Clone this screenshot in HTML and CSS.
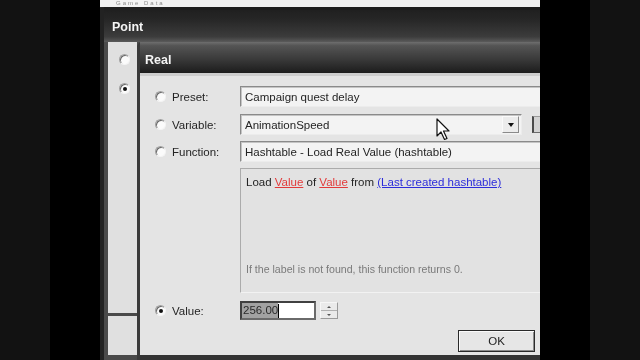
FILE: index.html
```html
<!DOCTYPE html>
<html>
<head>
<meta charset="utf-8">
<link rel="stylesheet" href="styles.css">
</head>
<body>
<div class="stage">
  <div class="band dim"></div>
  <div class="band black"></div>
  <div class="screen">
    <div class="backwin"><span>Game Data</span></div>
    <div class="win point">
      <div class="title">Point</div>
      <div class="point-body">
        <div class="point-col">
          <span class="radio"></span>
          <span class="radio on"></span>
        </div>
        <div class="point-foot"></div>
      </div>
    </div>
    <div class="win real">
      <div class="title">Real</div>
      <div class="real-body">
        <div class="row">
          <label class="opt"><span class="radio"></span>Preset:</label>
          <div class="field">Campaign quest delay</div>
        </div>
        <div class="row row-var">
          <label class="opt"><span class="radio"></span>Variable:</label>
          <div class="field select">AnimationSpeed<span class="drop-btn"><span class="tri-down"></span></span></div>
          <span class="extra"></span>
        </div>
        <div class="row">
          <label class="opt"><span class="radio"></span>Function:</label>
          <div class="field">Hashtable - Load Real Value (hashtable)</div>
        </div>
        <div class="desc">
          <div class="desc-line">Load <span class="param">Value</span> of <span class="param">Value</span> from <span class="link">(Last created hashtable)</span></div>
          <div class="desc-note">If the label is not found, this function returns 0.</div>
        </div>
        <div class="row row-value">
          <label class="opt"><span class="radio on"></span>Value:</label>
          <div class="num"><span class="sel">256.00</span><span class="caret"></span></div>
          <div class="spin"><span class="spin-half"><span class="tri-up"></span></span><span class="spin-half"><span class="tri-down small"></span></span></div>
        </div>
        <div class="row row-ok">
          <button class="ok">OK</button>
        </div>
      </div>
    </div>
    <svg class="cursor" width="15" height="23" viewBox="0 0 15 23">
      <path d="M1 1 L1 18 L5 14 L8.5 21.5 L11 20.5 L7.5 13 L13 13 Z" fill="#fff" stroke="#111" stroke-width="1.2" stroke-linejoin="round"/>
    </svg>
  </div>
  <div class="band black"></div>
  <div class="band dim"></div>
</div>
</body>
</html>
```
FILE: styles.css
```css
body {
  margin: 0;
  background: #111;
  font-family: "Liberation Sans", Arial, sans-serif;
}

.stage {
  display: flex;
  width: 640px;
  height: 360px;
  overflow: hidden;
}

.band { flex: 0 0 50px; }
.dim { background: #121212; }
.black { background: #000; }

.screen {
  flex: 0 0 440px;
  position: relative;
  overflow: hidden;
  background: #222;
  filter: blur(0.35px);
}

.backwin {
  height: 7px;
  background: #f2f2f2;
  border-bottom: 1px solid #2a2a2a;
  overflow: hidden;
  padding-left: 16px;
}

.backwin span {
  display: block;
  font-size: 6px;
  line-height: 7px;
  color: #8a8a8a;
  letter-spacing: 2px;
}

.win {
  position: absolute;
  display: flex;
  flex-direction: column;
}

.point {
  left: 1px;
  top: 7px;
  width: 470px;
  height: 360px;
  background: #3c3c3c;
  border-left: 3px solid #222;
  border-top-left-radius: 4px;
}

.title {
  flex: none;
  display: flex;
  align-items: center;
  color: #f4f4f4;
  font-weight: bold;
  font-size: 12.5px;
  box-sizing: border-box;
}

.point .title {
  height: 35px;
  padding: 5px 0 0 8px;
  background: linear-gradient(#1e1e1e, #262626 35%, #3c3c3c 85%, #5a5a5a);
}

.point-body {
  display: flex;
  flex-direction: column;
  padding-left: 4px;
  background: #4a4a4a;
  height: 318px;
}

.point-col {
  width: 29px;
  height: 271px;
  box-sizing: border-box;
  background: #e0e0e0;
  padding: 12px 0 0 11px;
  display: flex;
  flex-direction: column;
  gap: 18px;
}

.point-foot {
  width: 29px;
  height: 39px;
  margin-top: 3px;
  background: #e0e0e0;
}

.real {
  left: 37px;
  top: 42px;
  width: 404px;
  height: 318px;
  box-sizing: border-box;
  background: #333;
  border-left: 3px solid #3a3a3a;
  border-top-left-radius: 5px;
}

.real .title {
  height: 31px;
  padding: 4px 0 0 5px;
  background: linear-gradient(#6e6e6e, #545454 12%, #3a3a3a 55%, #1c1c1c);
}

.real-body {
  flex: none;
  height: 282px;
  box-sizing: border-box;
  border-top: 3px solid #cdcdcd;
  background: #e4e4e4;
  padding: 10px 0 0 15px;
  display: flex;
  flex-direction: column;
  gap: 6px;
  font-size: 11.5px;
  color: #242424;
}

.row {
  display: flex;
  align-items: center;
  height: 21px;
  flex: none;
}

.row-var { margin-top: 1px; }

.opt {
  flex: 0 0 85px;
  display: flex;
  align-items: center;
  gap: 6px;
}

.radio {
  position: relative;
  flex: none;
  width: 11px;
  height: 11px;
  box-sizing: border-box;
  border-radius: 50%;
  background: #fbfbfb;
  border: 1px solid;
  border-color: #a0a0a0 #f4f4f4 #f4f4f4 #a0a0a0;
  box-shadow: inset 1px 1px 0 #6a6a6a;
}

.radio.on::after {
  content: "";
  position: absolute;
  left: 50%;
  top: 50%;
  width: 4px;
  height: 4px;
  border-radius: 50%;
  background: #111;
  transform: translate(-50%, -50%);
}

.field {
  flex: 1;
  height: 21px;
  box-sizing: border-box;
  border: 1px solid;
  border-color: #8a8a8a #ececec #ececec #8a8a8a;
  box-shadow: inset 1px 1px 0 #c4c4c4;
  background: #f3f3f3;
  padding-left: 4px;
  display: flex;
  align-items: center;
  white-space: nowrap;
}

.select {
  flex: 0 0 282px;
}

.drop-btn {
  margin-left: auto;
  margin-right: 2px;
  width: 17px;
  height: 17px;
  box-sizing: border-box;
  background: #ececec;
  border: 1px solid;
  border-color: #fafafa #8a8a8a #8a8a8a #fafafa;
  display: flex;
  align-items: center;
  justify-content: center;
}

.tri-down {
  width: 0;
  height: 0;
  border-left: 3.5px solid transparent;
  border-right: 3.5px solid transparent;
  border-top: 4px solid #111;
}

.tri-down.small {
  border-left-width: 2px;
  border-right-width: 2px;
  border-top-width: 2px;
  border-top-color: #555;
}

.tri-up {
  width: 0;
  height: 0;
  border-left: 2px solid transparent;
  border-right: 2px solid transparent;
  border-bottom: 2px solid #555;
}

.extra {
  flex: 0 0 14px;
  height: 17px;
  margin-left: 10px;
  box-sizing: border-box;
  border-left: 2px solid #4a4a4a;
  border-top: 1px solid #9a9a9a;
  border-bottom: 1px solid #6a6a6a;
  background: #d2d2d2;
}

.desc {
  flex: none;
  margin-left: 85px;
  height: 125px;
  box-sizing: border-box;
  border: 1px solid;
  border-color: #ababab #f2f2f2 #f2f2f2 #ababab;
  background: #e2e2e2;
  display: flex;
  flex-direction: column;
  justify-content: space-between;
  padding: 6px 5px 16px 5px;
  line-height: 14px;
  white-space: nowrap;
}

.param {
  color: #e23a3a;
  text-decoration: underline;
}

.link {
  color: #2d2ddb;
  text-decoration: underline;
}

.desc-note {
  color: #7a7a7a;
  font-size: 10.6px;
}

.row-value {
  height: 19px;
  margin-top: 2px;
}

.num {
  flex: 0 0 76px;
  height: 19px;
  box-sizing: border-box;
  border: 2px solid;
  border-color: #404040 #6a6a6a #6a6a6a #404040;
  background: #fff;
  display: flex;
  align-items: center;
}

.sel {
  background: #a2a2a2;
  color: #2a2a2a;
  line-height: 15px;
  padding: 0 0 0 1px;
}

.caret {
  width: 1px;
  height: 14px;
  background: #000;
}

.spin {
  flex: 0 0 18px;
  height: 17px;
  margin-left: 4px;
  display: flex;
  flex-direction: column;
  border: 1px solid;
  border-color: #f6f6f6 #9a9a9a #9a9a9a #f6f6f6;
  box-sizing: border-box;
}

.spin-half {
  flex: 1;
  display: flex;
  align-items: center;
  justify-content: center;
  background: #eaeaea;
}

.spin-half + .spin-half {
  border-top: 1px solid #b0b0b0;
}

.row-ok {
  height: 22px;
  margin-top: 4px;
  justify-content: flex-end;
  padding-right: 6px;
}

.ok {
  width: 77px;
  height: 22px;
  box-sizing: border-box;
  border: 1px solid #2a2a2a;
  box-shadow: inset 1px 1px 0 #fafafa, inset -1px -1px 0 #8a8a8a;
  background: #e6e6e6;
  font-family: "Liberation Sans", Arial, sans-serif;
  font-size: 11.5px;
  color: #242424;
  padding: 0;
}

.cursor {
  position: absolute;
  left: 336px;
  top: 118px;
}
```
